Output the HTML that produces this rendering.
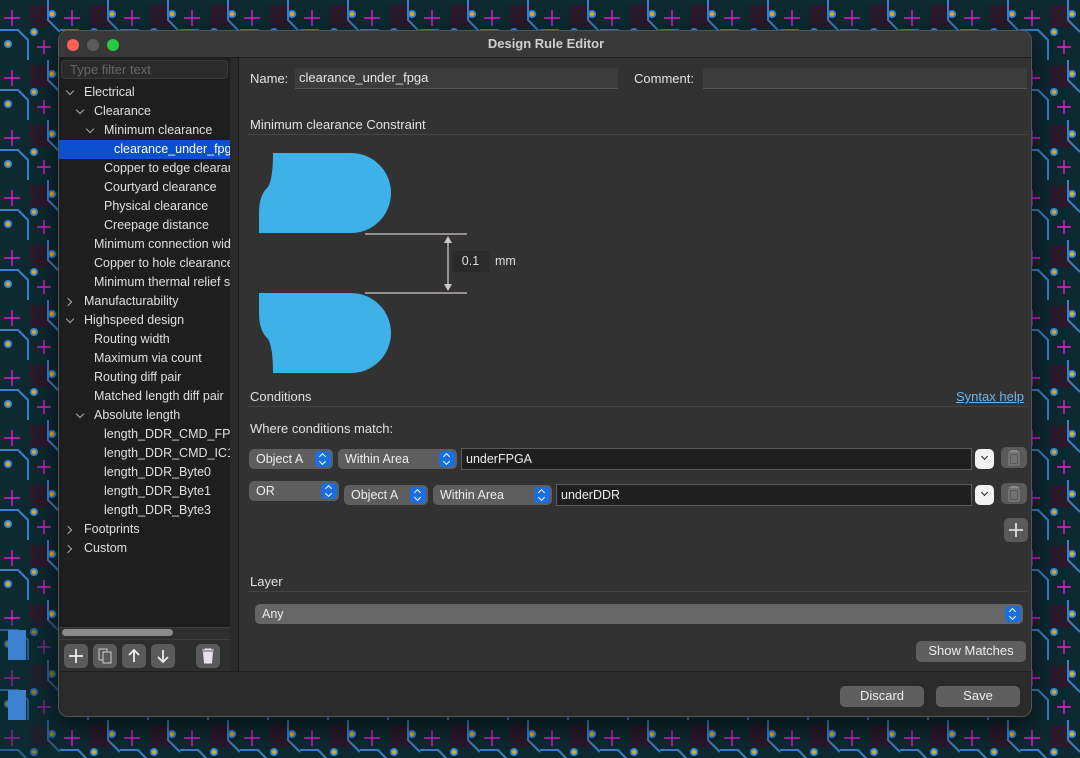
<!DOCTYPE html>
<html><head><meta charset="utf-8"><style>
*{box-sizing:border-box;margin:0;padding:0}
body{width:1080px;height:758px;overflow:hidden;background:#0d2a31;font-family:"Liberation Sans",sans-serif;font-size:12.5px;color:#e2e2e2;position:relative}
.abs{position:absolute}
.win{left:58px;top:30px;width:974px;height:687px;background:#323232;border-radius:10px;overflow:hidden;border:1px solid #555;box-shadow:0 10px 30px rgba(0,0,0,.6)}
.title{left:0;top:0;width:974px;height:27px;background:#383838;border-bottom:1px solid #1a1a1a;text-align:center;line-height:26px;font-weight:bold;color:#cfcfcf;font-size:13px}
.dot{top:8px;width:12px;height:12px;border-radius:6px}
.tree{left:0;top:27px;width:171px;height:569px;background:#1e1e1e}
.row{position:absolute;left:0;width:171px;height:19px;line-height:19px;white-space:nowrap;overflow:hidden;color:#e0e0e0}
.row.sel{background:#0a4fd0;color:#fff}
.chev{position:absolute;width:6px;height:6px;border-right:1.3px solid #aaa;border-bottom:1.3px solid #aaa;transform:rotate(45deg);top:5px}
.chev.r{transform:rotate(-45deg);top:7px}
.btn{position:absolute;width:24px;height:24px;border-radius:5px;background:#5a5a5a}
.field{position:absolute;background:#3c3c3c;border-bottom:1px solid #555;height:21px;line-height:20px;padding-left:4px;color:#e6e6e6}
.sep{position:absolute;height:1px;background:#444}
.pop{position:absolute;height:20px;background:#5e5e5e;border-radius:5px;line-height:20px;padding-left:7px;color:#eee}
.pop .ar{position:absolute;right:2px;top:2px;width:16px;height:16px;background:#1a6fe0;border-radius:4px}
.pop .ar:before{content:"";position:absolute;left:5px;top:3px;width:4px;height:4px;border-left:1.3px solid #fff;border-top:1.3px solid #fff;transform:rotate(45deg)}
.pop .ar:after{content:"";position:absolute;left:5px;top:8px;width:4px;height:4px;border-right:1.3px solid #fff;border-bottom:1.3px solid #fff;transform:rotate(45deg)}
.tin{position:absolute;height:22px;background:#1f1f1f;border:1px solid #5a5a5a;line-height:20px;padding-left:4px;color:#eee}
.dd{position:absolute;width:19px;height:20px;background:#f2f2f2;border-radius:5px}
.dd:after{content:"";position:absolute;left:7px;top:5px;width:4px;height:4px;border-right:1.5px solid #222;border-bottom:1.5px solid #222;transform:rotate(45deg)}
.trash{position:absolute;width:26px;height:21px;background:#5a5a5a;border-radius:5px}
.pb{position:absolute;height:21px;background:#5f5f5f;border-radius:5px;text-align:center;line-height:20px;color:#eee;font-size:13px}
</style></head><body>
<svg class="abs" style="left:0;top:0" width="1080" height="758">
<defs>
<pattern id="p" width="60" height="60" patternUnits="userSpaceOnUse">
<rect x="30" y="5" width="22" height="22" fill="#2a1a2c"/>
<path d="M12 10v16M4 18h16M44 40v14M37 47h14" stroke="#e020d0" stroke-width="1.4"/>
<circle cx="8" cy="44" r="4" fill="#3d8ad6"/><circle cx="8" cy="44" r="2" fill="#e2b120"/>
<circle cx="34" cy="32" r="4" fill="#3d8ad6"/><circle cx="34" cy="32" r="2" fill="#e2b120"/>
<circle cx="52" cy="14" r="4" fill="#3d8ad6"/><circle cx="52" cy="14" r="2" fill="#e2b120"/>
<path d="M0 30h18l10 10v20M48 0v20l12 12" stroke="#3a7fc8" stroke-width="2" fill="none"/>
</pattern></defs>
<rect width="1080" height="758" fill="url(#p)"/>
<rect x="0" y="620" width="60" height="138" fill="#0d2a31" opacity=".4"/>
<rect x="8" y="630" width="18" height="30" fill="#3d82d0"/><rect x="8" y="690" width="18" height="30" fill="#3d82d0"/>
</svg>
<div class="abs win">
 <div class="abs title">Design Rule Editor</div>
 <div class="abs dot" style="left:8px;background:#fe5f57"></div>
 <div class="abs dot" style="left:28px;background:#5b5b5b"></div>
 <div class="abs dot" style="left:48px;background:#28c840"></div>
 <div class="abs tree">
  <div class="abs" style="left:2px;top:2px;width:167px;height:19px;background:#2a2a2a;border:1px solid #3a3a3a;border-radius:4px;color:#666;line-height:17px;padding-left:8px;font-size:13px">Type filter text</div>
  <div class="row" style="top:25px"><span class="chev" style="left:8px"></span><span style="margin-left:25px">Electrical</span></div>
  <div class="row" style="top:44px"><span class="chev" style="left:18px"></span><span style="margin-left:35px">Clearance</span></div>
  <div class="row" style="top:63px"><span class="chev" style="left:28px"></span><span style="margin-left:45px">Minimum clearance</span></div>
  <div class="row sel" style="top:82px"><span style="margin-left:55px">clearance_under_fpga</span></div>
  <div class="row" style="top:101px"><span style="margin-left:45px">Copper to edge clearance</span></div>
  <div class="row" style="top:120px"><span style="margin-left:45px">Courtyard clearance</span></div>
  <div class="row" style="top:139px"><span style="margin-left:45px">Physical clearance</span></div>
  <div class="row" style="top:158px"><span style="margin-left:45px">Creepage distance</span></div>
  <div class="row" style="top:177px"><span style="margin-left:35px">Minimum connection width</span></div>
  <div class="row" style="top:196px"><span style="margin-left:35px">Copper to hole clearance</span></div>
  <div class="row" style="top:215px"><span style="margin-left:35px">Minimum thermal relief spokes</span></div>
  <div class="row" style="top:234px"><span class="chev r" style="left:6px"></span><span style="margin-left:25px">Manufacturability</span></div>
  <div class="row" style="top:253px"><span class="chev" style="left:8px"></span><span style="margin-left:25px">Highspeed design</span></div>
  <div class="row" style="top:272px"><span style="margin-left:35px">Routing width</span></div>
  <div class="row" style="top:291px"><span style="margin-left:35px">Maximum via count</span></div>
  <div class="row" style="top:310px"><span style="margin-left:35px">Routing diff pair</span></div>
  <div class="row" style="top:329px"><span style="margin-left:35px">Matched length diff pair</span></div>
  <div class="row" style="top:348px"><span class="chev" style="left:18px"></span><span style="margin-left:35px">Absolute length</span></div>
  <div class="row" style="top:367px"><span style="margin-left:45px">length_DDR_CMD_FPGA</span></div>
  <div class="row" style="top:386px"><span style="margin-left:45px">length_DDR_CMD_IC1</span></div>
  <div class="row" style="top:405px"><span style="margin-left:45px">length_DDR_Byte0</span></div>
  <div class="row" style="top:424px"><span style="margin-left:45px">length_DDR_Byte1</span></div>
  <div class="row" style="top:443px"><span style="margin-left:45px">length_DDR_Byte3</span></div>
  <div class="row" style="top:462px"><span class="chev r" style="left:6px"></span><span style="margin-left:25px">Footprints</span></div>
  <div class="row" style="top:481px"><span class="chev r" style="left:6px"></span><span style="margin-left:25px">Custom</span></div>
 </div>
 <div class="abs" style="left:0;top:596px;width:171px;height:44px;background:#2e2e2e;border-top:1px solid #3c3c3c"></div>
 <div class="abs" style="left:3px;top:598px;width:111px;height:7px;border-radius:4px;background:#8a8a8a"></div>
 <div class="abs" style="left:0;top:608px;width:171px;height:1px;background:#3e3e3e"></div>
 <svg class="abs" style="left:0;top:611px" width="171" height="28">
  <g fill="#5a5a5a"><rect x="5" y="2" width="24" height="24" rx="5"/><rect x="34" y="2" width="24" height="24" rx="5"/><rect x="63" y="2" width="24" height="24" rx="5"/><rect x="92" y="2" width="24" height="24" rx="5"/><rect x="137" y="2" width="24" height="24" rx="5"/></g>
  <g stroke="#eee" stroke-width="1.8" fill="none"><path d="M17 7v14M10 14h14"/><path d="M75 20V8M70 13l5-5 5 5"/><path d="M104 8v12M99 15l5 5 5-5"/></g>
  <g stroke="#ccc" stroke-width="1" fill="none"><rect x="40" y="7" width="8" height="11"/><rect x="44" y="10" width="8" height="11" fill="#5a5a5a"/></g>
  <path d="M143 8h12M146 8v-1h6v1M144.5 10h9l-1 11h-7z" fill="#e8e0ea" stroke="#e8e0ea"/>
 </svg>
 <div class="abs" style="left:171px;top:27px;width:8px;height:613px;background:#2a2a2a"></div>
 <div class="abs" style="left:179px;top:27px;width:1px;height:613px;background:#1a1a1a"></div>
 <div class="abs" style="left:0;top:640px;width:974px;height:47px;background:#2a2a2a;border-top:1px solid #1f1f1f"></div>

 <div class="abs" style="left:191px;top:40px;font-size:13px">Name:</div>
 <div class="field" style="left:236px;top:37px;width:323px;font-size:13px">clearance_under_fpga</div>
 <div class="abs" style="left:575px;top:40px;font-size:13px">Comment:</div>
 <div class="field" style="left:644px;top:37px;width:324px"></div>
 <div class="abs" style="left:191px;top:86px;font-size:13px">Minimum clearance Constraint</div>
 <div class="sep" style="left:188px;top:103px;width:780px"></div>
 <svg class="abs" style="left:190px;top:110px" width="300" height="250">
  <path d="M24 12H102A40 40 0 0 1 102 92H10V72Q10 54 19 46Q24 38 24 12Z" fill="#3fb1e9"/>
  <path d="M10 152H102A40 40 0 0 1 102 232H24Q24 206 19 198Q10 190 10 172Z" fill="#3fb1e9"/>
  <path d="M116 93H218M116 152H218M199 96V149" stroke="#cfc6cf" stroke-width="1.3"/>
  <path d="M199 95l-4 7h8zM199 150l-4-7h8z" fill="#cfc6cf"/>
 </svg>
 <div class="abs" style="left:393px;top:220px;width:37px;height:21px;background:#2a2a2a;text-align:center;line-height:21px;color:#ddd">0.1</div>
 <div class="abs" style="left:436px;top:223px;color:#ddd">mm</div>

 <div class="abs" style="left:191px;top:358px;font-size:13px">Conditions</div>
 <div class="abs" style="left:897px;top:358px;font-size:13px;color:#6cb6f0;text-decoration:underline">Syntax help</div>
 <div class="sep" style="left:188px;top:375px;width:780px"></div>
 <div class="abs" style="left:191px;top:390px;font-size:13px">Where conditions match:</div>
 <div class="pop" style="left:190px;top:418px;width:84px">Object A<span class="ar"></span></div>
 <div class="pop" style="left:279px;top:418px;width:119px">Within Area<span class="ar"></span></div>
 <div class="tin" style="left:402px;top:417px;width:511px">underFPGA</div>
 <div class="dd" style="left:916px;top:418px"></div>
 <div class="trash" style="left:942px;top:416px"></div>
 <div class="pop" style="left:190px;top:450px;width:90px">OR<span class="ar"></span></div>
 <div class="pop" style="left:285px;top:454px;width:84px">Object A<span class="ar"></span></div>
 <div class="pop" style="left:374px;top:454px;width:119px">Within Area<span class="ar"></span></div>
 <div class="tin" style="left:497px;top:453px;width:416px">underDDR</div>
 <div class="dd" style="left:916px;top:454px"></div>
 <div class="trash" style="left:942px;top:452px"></div>
 <svg class="abs" style="left:942px;top:416px" width="26" height="60"><g fill="#8a8a8a"><path d="M8 4h10v1H8zM10 3h6v1h-6z"/><rect x="8" y="6" width="10" height="12" rx="1" fill="none" stroke="#8a8a8a"/><path d="M11 8v8M13 8v8M15 8v8" stroke="#8a8a8a"/></g><g fill="#8a8a8a" transform="translate(0,36)"><path d="M8 4h10v1H8zM10 3h6v1h-6z"/><rect x="8" y="6" width="10" height="12" rx="1" fill="none" stroke="#8a8a8a"/><path d="M11 8v8M13 8v8M15 8v8" stroke="#8a8a8a"/></g></svg>
 <div class="btn" style="left:945px;top:487px"></div>
 <svg class="abs" style="left:945px;top:487px" width="24" height="24"><path d="M12 5v14M5 12h14" stroke="#ddd" stroke-width="1.8"/></svg>

 <div class="abs" style="left:191px;top:543px;font-size:13px">Layer</div>
 <div class="sep" style="left:188px;top:560px;width:780px"></div>
 <div class="pop" style="left:196px;top:573px;width:768px;background:#666">Any<span class="ar"></span></div>
 <div class="pb" style="left:857px;top:610px;width:110px">Show Matches</div>
 <div class="pb" style="left:781px;top:655px;width:84px">Discard</div>
 <div class="pb" style="left:877px;top:655px;width:84px">Save</div>
</div>
</body></html>
